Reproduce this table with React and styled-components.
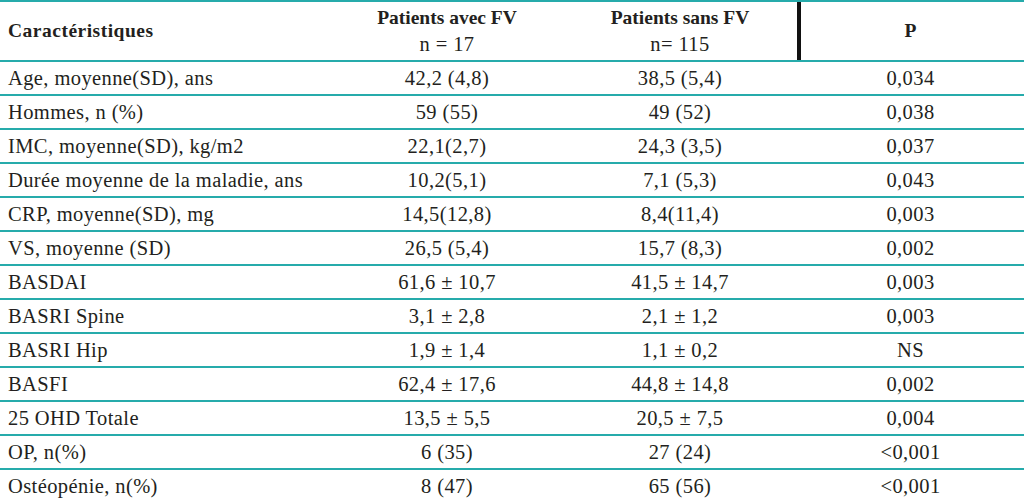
import React from "react";
import styled, { createGlobalStyle } from "styled-components";

const GlobalStyle = createGlobalStyle`
  html, body {
    margin: 0;
    padding: 0;
    background: #ffffff;
  }
  body {
    font-family: "Liberation Serif", "Times New Roman", Times, serif;
    color: #231f20;
  }
`;

const line = "#26abab";

const Table = styled.div`
  width: 1024px;
  display: flex;
  flex-direction: column;
  border-top: 2px solid ${line};
`;

const Row = styled.div`
  display: grid;
  grid-template-columns: 331px 232px 234px 1fr;
  height: ${(props) => (props.header ? "58px" : "34px")};
  box-sizing: border-box;
  border-top: ${(props) => (props.header ? "none" : `2px solid ${line}`)};
`;

const Cell = styled.div`
  display: flex;
  flex-direction: column;
  justify-content: center;
  align-items: ${(props) => (props.left ? "flex-start" : "center")};
  padding-left: ${(props) => (props.left ? "8px" : "0")};
  font-size: 20.5px;
  line-height: 26px;
  letter-spacing: 0.4px;
  white-space: nowrap;
`;

const HeadCell = styled(Cell)`
  font-size: 19.5px;
  font-weight: 700;
  letter-spacing: ${(props) => props.spacing || "0"};
  box-shadow: ${(props) => (props.divider ? "inset 4px 0 0 #111" : "none")};
`;

const Sub = styled.span`
  font-size: 20.5px;
  font-weight: 400;
  letter-spacing: 0.4px;
`;

const rows = [
  ["Age, moyenne(SD), ans", "42,2 (4,8)", "38,5 (5,4)", "0,034"],
  ["Hommes, n (%)", "59 (55)", "49 (52)", "0,038"],
  ["IMC, moyenne(SD), kg/m2", "22,1(2,7)", "24,3 (3,5)", "0,037"],
  ["Durée moyenne de la maladie, ans", "10,2(5,1)", "7,1 (5,3)", "0,043"],
  ["CRP, moyenne(SD), mg", "14,5(12,8)", "8,4(11,4)", "0,003"],
  ["VS, moyenne (SD)", "26,5 (5,4)", "15,7 (8,3)", "0,002"],
  ["BASDAI", "61,6 ± 10,7", "41,5 ± 14,7", "0,003"],
  ["BASRI Spine", "3,1 ± 2,8", "2,1 ± 1,2", "0,003"],
  ["BASRI Hip", "1,9 ± 1,4", "1,1 ± 0,2", "NS"],
  ["BASFI", "62,4 ± 17,6", "44,8 ± 14,8", "0,002"],
  ["25 OHD Totale", "13,5 ± 5,5", "20,5 ± 7,5", "0,004"],
  ["OP, n(%)", "6 (35)", "27 (24)", "<0,001"],
  ["Ostéopénie, n(%)", "8 (47)", "65 (56)", "<0,001"],
];

export default function App() {
  return (
    <>
      <GlobalStyle />
      <Table>
        <Row header>
          <HeadCell left spacing="0.5px">
            Caractéristiques
          </HeadCell>
          <HeadCell>
            Patients avec FV
            <Sub>n = 17</Sub>
          </HeadCell>
          <HeadCell>
            Patients sans FV
            <Sub>n= 115</Sub>
          </HeadCell>
          <HeadCell divider>P</HeadCell>
        </Row>
        {rows.map((r) => (
          <Row key={r[0]}>
            <Cell left>{r[0]}</Cell>
            <Cell>{r[1]}</Cell>
            <Cell>{r[2]}</Cell>
            <Cell>{r[3]}</Cell>
          </Row>
        ))}
      </Table>
    </>
  );
}
